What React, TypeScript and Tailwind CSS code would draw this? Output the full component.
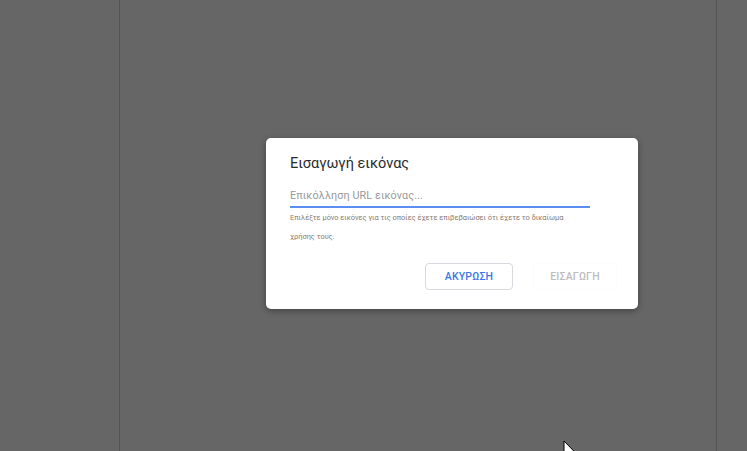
import React from 'react'

function Cursor() {
  return (
    <svg
      className="absolute left-[563px] top-[440px]"
      width="14"
      height="20"
      viewBox="0 0 14 20"
    >
      <path d="M1 1 L1 16 L4.5 12.5 L7 18.5 L9.2 17.6 L6.8 11.8 L11.5 11.8 Z" fill="#fff" stroke="#000" strokeWidth="1" strokeLinejoin="round" />
    </svg>
  )
}

export default function App() {
  return (
    <div
      className="relative w-[747px] h-[451px] overflow-hidden bg-[#666666] flex"
      style={{ fontFamily: 'Roboto, "Noto Sans", "Liberation Sans", sans-serif' }}
    >
      <div className="w-[119px] shrink-0" />
      <div className="w-[598px] shrink-0 h-full border-x border-[#545454] bg-[#666666]" />
      <div className="flex-1" />

      {/* dialog overlay */}
      <div className="absolute left-[266px] top-[138px] w-[372px] h-[171px] bg-white rounded-[5px] shadow-[0_2px_6px_rgba(0,0,0,0.35)] pl-6 pr-[21px] pt-[16px] pb-[19px] flex flex-col">
        <h2 className="text-[14.5px] leading-[20px] text-[#2a2a2a] font-normal">Εισαγωγή εικόνας</h2>
        <div className="mt-[12px] w-[300px] h-[22px] border-b-2 border-[#5a8ef0] flex items-center">
          <span className="text-[10.8px] text-[#9a9a9a] tracking-[0.1px]">Επικόλληση URL εικόνας...</span>
        </div>
        <div className="w-[300px] text-[7.4px] text-[#8a7a70]">
          <div className="mt-[2px] h-[16px] flex items-center">
            Επιλέξτε μόνο εικόνες για τις οποίες έχετε επιβεβαιώσει ότι έχετε το δικαίωμα
          </div>
          <div className="mt-[3px] h-[16px] flex items-center">χρήσης τους.</div>
        </div>
        <div className="mt-auto flex justify-end gap-5">
          <button className="w-[88px] h-[27px] rounded-[4px] border border-[#d6d9dd] text-[10.5px] font-medium text-[#3b78e7] tracking-[0.2px]">
            ΑΚΥΡΩΣΗ
          </button>
          <button className="w-[84px] h-[27px] rounded-[4px] border border-dotted border-[#f9f9f9] text-[10.5px] font-medium text-[#bdbdbd] tracking-[0.2px]">
            ΕΙΣΑΓΩΓΗ
          </button>
        </div>
      </div>

      <Cursor />
    </div>
  )
}
